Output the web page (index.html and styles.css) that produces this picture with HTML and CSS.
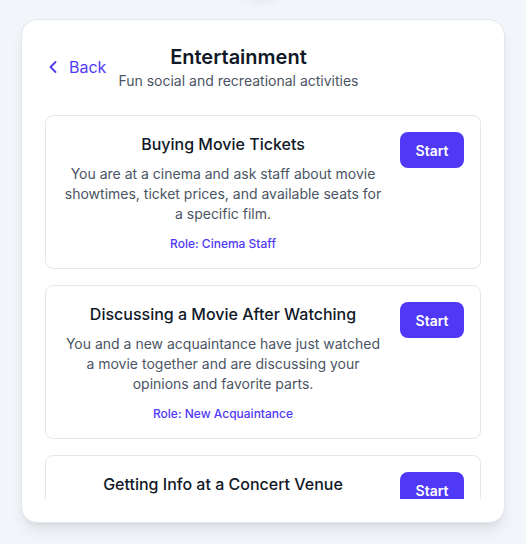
FILE: index.html
```html
<!DOCTYPE html>
<html lang="en">
<head>
<meta charset="utf-8">
<title>Entertainment</title>
<link rel="stylesheet" href="styles.css">
</head>
<body>
<div class="page">
  <div class="top-blob"></div>
  <section class="panel">
    <header class="panel-header">
      <button class="back-btn" type="button">
        <svg class="back-icon" viewBox="0 0 24 24" width="20" height="20" fill="none" stroke="currentColor" stroke-width="2.2" stroke-linecap="round" stroke-linejoin="round"><path d="M15 18l-6-6 6-6"/></svg>
        <span>Back</span>
      </button>
      <div class="heading">
        <h1 class="title">Entertainment</h1>
        <p class="subtitle">Fun social and recreational activities</p>
      </div>
    </header>
    <div class="list">
      <article class="scenario">
        <div class="scenario-text">
          <h2 class="scenario-title">Buying Movie Tickets</h2>
          <p class="scenario-desc">You are at a cinema and ask staff about movie showtimes, ticket prices, and available seats for a specific film.</p>
          <p class="scenario-role">Role: Cinema Staff</p>
        </div>
        <button class="start-btn" type="button">Start</button>
      </article>
      <article class="scenario">
        <div class="scenario-text">
          <h2 class="scenario-title">Discussing a Movie After Watching</h2>
          <p class="scenario-desc">You and a new acquaintance have just watched a movie together and are discussing your opinions and favorite parts.</p>
          <p class="scenario-role">Role: New Acquaintance</p>
        </div>
        <button class="start-btn" type="button">Start</button>
      </article>
      <article class="scenario">
        <div class="scenario-text">
          <h2 class="scenario-title">Getting Info at a Concert Venue</h2>
          <p class="scenario-desc">You arrive at a concert venue and ask the staff about entry times, ticket checks, and where to find your seats.</p>
          <p class="scenario-role">Role: Venue Staff</p>
        </div>
        <button class="start-btn" type="button">Start</button>
      </article>
    </div>
  </section>
</div>
</body>
</html>
```

FILE: styles.css
```css
* {
  box-sizing: border-box;
}

html, body {
  margin: 0;
  padding: 0;
}

body {
  background: #f2f5f9;
  font-family: Inter, "Noto Sans", "Liberation Sans", sans-serif;
  color: #111827;
  height: 544px;
  overflow: hidden;
}

.page {
  position: relative;
  padding-top: 19px;
}

.top-blob {
  position: absolute;
  left: 238px;
  top: -40px;
  width: 50px;
  height: 40px;
  border-radius: 50%;
  background: rgba(148, 163, 184, 0.18);
  filter: blur(6px);
}

.panel {
  position: relative;
  width: 484px;
  margin: 0 auto;
  background: #ffffff;
  border: 1px solid #e3e6ec;
  border-radius: 16px;
  padding: 23px;
  box-shadow: 0 10px 15px -3px rgba(15, 23, 42, 0.09), 0 4px 6px -4px rgba(15, 23, 42, 0.09);
}

.panel-header {
  display: flex;
  align-items: center;
  gap: 12px;
  margin-bottom: 24px;
}

.back-btn {
  display: flex;
  align-items: center;
  gap: 6px;
  margin-left: -2px;
  padding: 0;
  border: none;
  background: none;
  color: #4f39f6;
  font-family: inherit;
  font-size: 16px;
  line-height: 24px;
  cursor: pointer;
}

.back-icon {
  display: block;
}

.heading {
  text-align: center;
}

.title {
  margin: 0;
  font-size: 20px;
  line-height: 28px;
  font-weight: 600;
  color: #111827;
}

.subtitle {
  margin: 0;
  font-size: 14px;
  line-height: 20px;
  color: #4b5563;
}

.list {
  height: 384px;
  overflow-y: auto;
  scrollbar-width: none;
  display: flex;
  flex-direction: column;
  gap: 16px;
}

.scenario {
  flex-shrink: 0;
  display: flex;
  align-items: flex-start;
  gap: 16px;
  padding: 16px;
  border: 1px solid #e5e7eb;
  border-radius: 8px;
  background: #ffffff;
}

.scenario-text {
  flex: 1;
  text-align: center;
}

.scenario-title {
  margin: 0;
  font-size: 16px;
  line-height: 24px;
  font-weight: 500;
  color: #111827;
}

.scenario-desc {
  margin: 8px 0 0;
  font-size: 14px;
  line-height: 20px;
  color: #4b5563;
}

.scenario-role {
  margin: 12px 0 0;
  font-size: 12px;
  line-height: 16px;
  font-weight: 500;
  color: #4f39f6;
}

.start-btn {
  flex-shrink: 0;
  width: 64px;
  height: 36px;
  border: none;
  border-radius: 8px;
  background: #4f39f6;
  color: #ffffff;
  font-family: inherit;
  font-size: 14px;
  font-weight: 600;
  cursor: pointer;
}
```
